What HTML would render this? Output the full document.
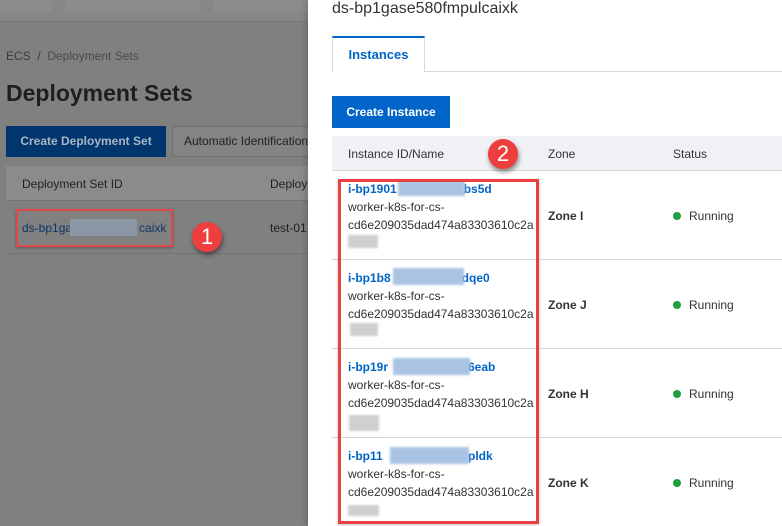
<!DOCTYPE html>
<html><head><style>
*{margin:0;padding:0;box-sizing:border-box}
body{width:782px;height:526px;overflow:hidden;position:relative;font-family:"Liberation Sans",Arial,sans-serif;background:#808080;color:#333}
.a{position:absolute}
.blur{position:absolute;background:#a9c3e3;filter:blur(1px)}
.gblur{position:absolute;background:#cfcfcf;filter:blur(1px)}
.row{position:absolute;left:308px;width:474px;border-bottom:1px solid #d8d8d8}
.id{position:absolute;left:348px;font-size:12px;font-weight:bold;color:#0064c8}
.nm{position:absolute;left:348px;font-size:12px;color:#333;line-height:18px}
.zn{position:absolute;left:548px;font-size:12px;font-weight:bold;color:#333}
.st{position:absolute;left:673px;font-size:12px;color:#333}
.st:before{content:"";display:inline-block;width:8px;height:8px;border-radius:50%;background:#1e9e3c;margin-right:8px;vertical-align:0px}
.badge{position:absolute;width:30px;height:30px;border-radius:50%;background:#ef3e3e;color:#fff;font-size:22px;text-align:center;line-height:30px;box-shadow:1px 3px 5px rgba(0,0,0,.45)}
</style></head><body>
<!-- left dimmed page -->
<div class="a" style="left:0;top:0;width:308px;height:22px;background:#878787;border-bottom:1px solid #777"></div>
<div class="a" style="left:0;top:0;width:52px;height:12px;background:#8c8c8c"></div>
<div class="a" style="left:65px;top:0;width:135px;height:12px;background:#8c8c8c"></div>
<div class="a" style="left:213px;top:0;width:95px;height:12px;background:#8c8c8c"></div>
<div class="a" style="left:6px;top:49px;font-size:12px;color:#3a3a3a">ECS &nbsp;/ &nbsp;<span style="color:#4a4a4a">Deployment Sets</span></div>
<div class="a" style="left:6px;top:80px;font-size:23px;font-weight:bold;color:#1e1e1e">Deployment Sets</div>
<div class="a" style="left:6px;top:126px;width:160px;height:31px;background:#00356e;color:#a8b6c6;font-size:12px;font-weight:bold;text-align:center;line-height:31px">Create Deployment Set</div>
<div class="a" style="left:172px;top:126px;width:140px;height:31px;border:1px solid #6e6e6e;background:#848484;color:#1f1f1f;font-size:12px;line-height:29px;padding-left:11px;white-space:nowrap;overflow:hidden">Automatic Identification</div>
<div class="a" style="left:6px;top:166px;width:302px;height:35px;background:#8a8b8d;border-bottom:1px solid #737373"></div>
<div class="a" style="left:22px;top:177px;font-size:12px;color:#222">Deployment Set ID</div>
<div class="a" style="left:270px;top:177px;font-size:12px;color:#222">Deploy</div>
<div class="a" style="left:6px;top:253px;width:302px;height:1px;background:#737373"></div>
<div class="a" style="left:22px;top:221px;font-size:12px;color:#0c3566">ds-bp1ga<span style="display:inline-block;width:67px"></span>caixk</div>
<div class="a" style="left:70px;top:219px;width:67px;height:17px;background:#8c97a6"></div>
<div class="a" style="left:270px;top:221px;font-size:12px;color:#1e1e1e">test-01</div>
<div class="a" style="left:16px;top:209px;width:157px;height:38px;border:2px solid #e04848;box-shadow:0 1px 3px rgba(0,0,0,.3)"></div>
<div class="badge" style="left:192px;top:222px">1</div>
<!-- drawer -->
<div class="a" style="left:308px;top:0;width:474px;height:526px;background:#fff;box-shadow:-2px 0 6px rgba(0,0,0,.2)"></div>
<div class="a" style="left:332px;top:0px;font-size:16px;color:#333">ds-bp1gase580fmpulcaixk</div>
<div class="a" style="left:332px;top:71px;width:450px;height:1px;background:#d8d8d8"></div>
<div class="a" style="left:332px;top:36px;width:93px;height:36px;border:1px solid #d8d8d8;border-top:2px solid #0064c8;border-bottom:none;background:#fff;color:#0064c8;font-size:13px;font-weight:bold;text-align:center;line-height:33px">Instances</div>
<div class="a" style="left:332px;top:96px;width:118px;height:32px;background:#0064c8;color:#fff;font-size:12px;font-weight:bold;text-align:center;line-height:32px">Create Instance</div>
<div class="a" style="left:332px;top:136px;width:450px;height:35px;background:#eff1f4;border-bottom:1px solid #d8d8d8"></div>
<div class="a" style="left:348px;top:147px;font-size:12px;color:#333">Instance ID/Name</div>
<div class="a" style="left:548px;top:147px;font-size:12px;color:#333">Zone</div>
<div class="a" style="left:673px;top:147px;font-size:12px;color:#333">Status</div>
<div class="row" style="left:332px;width:450px;top:171px;height:89px"></div>
<div class="row" style="left:332px;width:450px;top:260px;height:89px"></div>
<div class="row" style="left:332px;width:450px;top:349px;height:89px"></div>

<div class="id" style="top:182px">i-bp1901<span style="display:inline-block;width:67px"></span>bs5d</div>
<div class="blur" style="left:398px;top:181px;width:67px;height:15px"></div>
<div class="nm" style="top:198px">worker-k8s-for-cs-<br>cd6e209035dad474a83303610c2a</div>
<div class="gblur" style="left:348px;top:235px;width:30px;height:13px"></div>
<div class="zn" style="top:209px">Zone I</div><div class="st" style="top:209px">Running</div>

<div class="id" style="top:271px">i-bp1b8<span style="display:inline-block;width:71px"></span>dqe0</div>
<div class="blur" style="left:393px;top:268px;width:71px;height:17px"></div>
<div class="nm" style="top:287px">worker-k8s-for-cs-<br>cd6e209035dad474a83303610c2a</div>
<div class="gblur" style="left:350px;top:323px;width:28px;height:13px"></div>
<div class="zn" style="top:298px">Zone J</div><div class="st" style="top:298px">Running</div>

<div class="id" style="top:360px">i-bp19r<span style="display:inline-block;width:76px"></span>t6eab</div>
<div class="blur" style="left:393px;top:358px;width:77px;height:17px"></div>
<div class="nm" style="top:376px">worker-k8s-for-cs-<br>cd6e209035dad474a83303610c2a</div>
<div class="gblur" style="left:349px;top:415px;width:30px;height:16px"></div>
<div class="zn" style="top:387px">Zone H</div><div class="st" style="top:387px">Running</div>

<div class="id" style="top:449px">i-bp11<span style="display:inline-block;width:78px"></span>opldk</div>
<div class="blur" style="left:390px;top:447px;width:79px;height:17px"></div>
<div class="nm" style="top:465px">worker-k8s-for-cs-<br>cd6e209035dad474a83303610c2a</div>
<div class="gblur" style="left:348px;top:505px;width:31px;height:11px"></div>
<div class="zn" style="top:476px">Zone K</div><div class="st" style="top:476px">Running</div>

<div class="a" style="left:338px;top:179px;width:201px;height:345px;border:3px solid #ea4040;box-shadow:0 1px 3px rgba(0,0,0,.25)"></div>
<div class="badge" style="left:488px;top:139px">2</div>
</body></html>
